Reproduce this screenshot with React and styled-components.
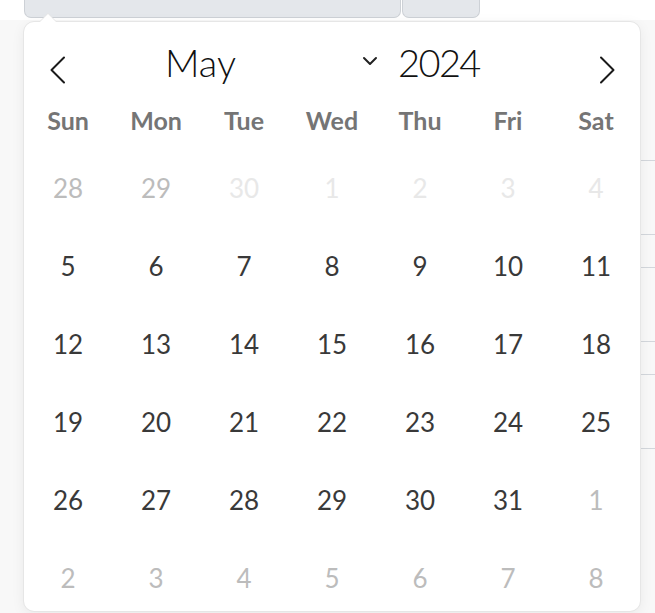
import React from "react";
import styled, { createGlobalStyle } from "styled-components";

const GlobalStyle = createGlobalStyle`
  html, body { margin: 0; padding: 0; }
  body {
    background: #ffffff;
    font-family: "Lato", "Noto Sans", sans-serif;
    -webkit-font-smoothing: antialiased;
  }
`;

const Page = styled.div`
  position: relative;
  width: 655px;
  height: 613px;
  overflow: hidden;
  background: #ffffff;
`;

const TopBar = styled.div`
  display: flex;
  height: 20px;
  padding-left: 24px;
  background: #ffffff;
`;

const FieldPart = styled.div`
  box-sizing: border-box;
  width: ${(p) => p.$w}px;
  height: 18px;
  background: #e4e7eb;
  border: 1px solid #cdd1d6;
  border-top: none;
  border-radius: 0 0 7px 7px;
  margin-right: 1px;
`;

const Content = styled.div`
  background: #f8f8f8;
  height: 593px;
  padding-top: 140px;
  box-sizing: border-box;
  display: flex;
  flex-direction: column;
  gap: 32px;
`;

const BgCard = styled.div`
  box-sizing: border-box;
  margin-left: 560px;
  height: 75px;
  border-top: 1px solid #d3d7dc;
  border-bottom: 1px solid #d3d7dc;
`;

const Calendar = styled.div`
  position: absolute;
  top: 22px;
  left: 24px;
  width: 616px;
  height: 589px;
  background: #ffffff;
  border-radius: 10px;
  box-shadow: 1px 0 0 #e6e6e6, -1px 0 0 #e6e6e6, 0 1px 0 #e6e6e6,
    0 -1px 0 #e6e6e6, 0 3px 14px rgba(0, 0, 0, 0.07);
  color: #393939;

  &::before,
  &::after {
    content: "";
    position: absolute;
    left: 24px;
    width: 0;
    height: 0;
    border: solid transparent;
    pointer-events: none;
  }
  &::before {
    bottom: 100%;
    margin-left: -9px;
    border-width: 9px;
    border-bottom-color: #e6e6e6;
  }
  &::after {
    bottom: 100%;
    margin-left: -8px;
    border-width: 8px;
    border-bottom-color: #ffffff;
  }
`;

const Inner = styled.div`
  position: relative;
  height: 100%;
  overflow: hidden;
  border-radius: 10px;
`;

const Header = styled.div`
  display: flex;
  align-items: flex-start;
  height: 72px;
`;

const NavButton = styled.button`
  all: unset;
  width: 66px;
  display: flex;
  justify-content: center;
  margin-top: 34px;
  cursor: pointer;
`;

const MonthBox = styled.div`
  margin-left: 75px;
  width: 215px;
  display: flex;
  align-items: flex-start;
  justify-content: space-between;
  padding-right: 2px;
  box-sizing: border-box;
`;

const BigText = styled.span`
  display: block;
  margin-top: 21px;
  font-size: 38px;
  font-weight: 300;
  color: #111;
  line-height: 1;
`;

const Chevron = styled.svg`
  display: block;
  margin-top: 34px;
`;

const Year = styled(BigText)`
  margin-left: 18px;
  letter-spacing: -1.6px;
`;

const Spacer = styled.div`
  flex: 1;
`;

const Grid = styled.div`
  display: grid;
  grid-template-columns: repeat(7, 88px);
`;

const WeekRow = styled(Grid)`
  height: 55px;
  box-sizing: border-box;
  padding-bottom: 4px;
  align-items: center;
`;

const WeekDay = styled.span`
  text-align: center;
  font-size: 25px;
  font-weight: 700;
  color: #757575;
`;

const DayGrid = styled(Grid)`
  grid-auto-rows: 78px;
`;

const Day = styled.span`
  display: flex;
  align-items: center;
  justify-content: center;
  font-size: 26px;
  font-weight: 400;
  color: ${(p) =>
    p.$kind === "disabled" ? "#e8e8e8" : p.$kind === "other" ? "#bcbcbc" : "#393939"};
`;

const weekdays = ["Sun", "Mon", "Tue", "Wed", "Thu", "Fri", "Sat"];

const days = [
  [28, "other"], [29, "other"], [30, "disabled"], [1, "disabled"], [2, "disabled"], [3, "disabled"], [4, "disabled"],
];
for (let d = 5; d <= 31; d++) days.push([d, "cur"]);
for (let d = 1; d <= 8; d++) days.push([d, "other"]);

const ArrowLeft = () => (
  <svg width="17" height="28" viewBox="0 0 17 28">
    <path d="M15 1.5 L2.5 14 L15 26.5" fill="none" stroke="#1a1a1a" strokeWidth="2" strokeLinecap="round" strokeLinejoin="round" />
  </svg>
);

const ArrowRight = () => (
  <svg width="17" height="28" viewBox="0 0 17 28">
    <path d="M2 1.5 L14.5 14 L2 26.5" fill="none" stroke="#1a1a1a" strokeWidth="2" strokeLinecap="round" strokeLinejoin="round" />
  </svg>
);

export default function App() {
  return (
    <>
      <GlobalStyle />
      <Page>
        <TopBar>
          <FieldPart $w={377} />
          <FieldPart $w={78} />
        </TopBar>
        <Content>
          <BgCard />
          <BgCard />
          <BgCard />
        </Content>
        <Calendar>
          <Inner>
            <Header>
              <NavButton aria-label="Previous month">
                <ArrowLeft />
              </NavButton>
              <MonthBox>
                <BigText>May</BigText>
                <Chevron width="16" height="10" viewBox="0 0 16 10">
                  <path d="M2 2 L8 8 L14 2" fill="none" stroke="#222" strokeWidth="2" strokeLinecap="round" strokeLinejoin="round" />
                </Chevron>
              </MonthBox>
              <Year>2024</Year>
              <Spacer />
              <NavButton aria-label="Next month">
                <ArrowRight />
              </NavButton>
            </Header>
            <WeekRow>
              {weekdays.map((w) => (
                <WeekDay key={w}>{w}</WeekDay>
              ))}
            </WeekRow>
            <DayGrid>
              {days.map(([d, k], i) => (
                <Day key={i} $kind={k}>
                  {d}
                </Day>
              ))}
            </DayGrid>
          </Inner>
        </Calendar>
      </Page>
    </>
  );
}
